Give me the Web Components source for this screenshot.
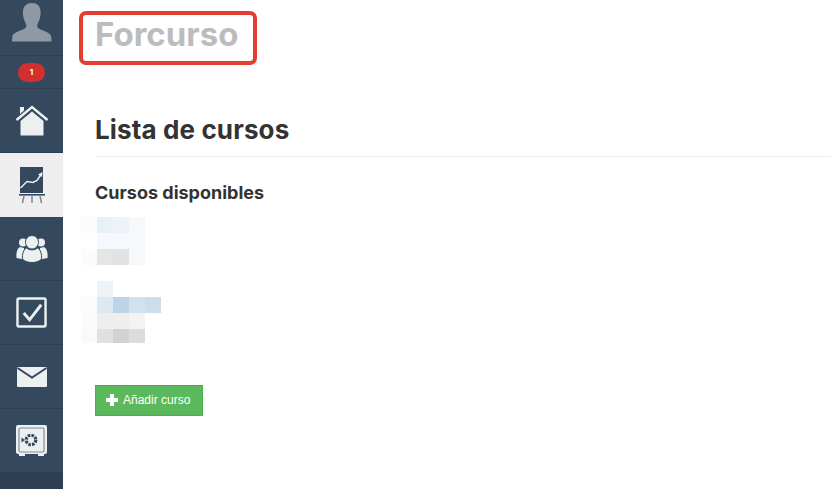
<!DOCTYPE html>
<html lang="es">
<head>
<meta charset="utf-8">
<title>Forcurso</title>
<style>
	html, body { margin: 0; height: 100%; background: #fff; overflow: hidden; }
	body { font-family: Inter, "Liberation Sans", sans-serif; }
</style>
</head>
<body>
<app-shell>
	<side-nav slot="nav">
		<nav-item size="avatar">
			<svg style="margin-bottom:9px" width="42" height="40" viewBox="0 2 44 42" preserveAspectRatio="none"><path fill="#8e99a4" d="M22 2c6 0 9 3.500 9 10 0 3-.5 6-1.500 8.500-.8 2-2 3.500-2 5.500 0 2 1 3 4 4 5 1.700 9.500 3.500 10.500 6.500l.5 6H1l.5-6c1-3 5.500-4.800 10.500-6.500 3-1 4-2 4-4 0-2-1.200-3.500-2-5.500C13 18 12.500 15 12.500 12 12.500 5.500 16 2 22 2z"/></svg>
		</nav-item>
		<nav-item size="badge"><span class="badge">1</span></nav-item>
		<nav-item>
			<svg width="34" height="32" viewBox="0 0 34 32"><path fill="#ecf0f1" d="M5 2h4v3.500L5 9z"/><path fill="none" stroke="#ecf0f1" stroke-width="2.400" d="M1.500 15L17 2l15.500 13"/><path fill="#ecf0f1" d="M17 6.500l11.500 9.500V30.500H5.500V16z"/></svg>
		</nav-item>
		<nav-item active>
			<svg width="26" height="36" viewBox="0 0 26 36"><path fill="#34495e" d="M1 0h23v26H1z"/><path fill="none" stroke="#ecf0f1" stroke-width="1.500" d="M1.500 21L8 14.500l6 1 4-2 4-6"/><path fill="#ecf0f1" d="M23.500 5l-.5 5-4-2.500z"/><path fill="#34495e" d="M0 27h26v1.600H0z"/><path fill="none" stroke="#7b8793" stroke-width="1.500" d="M5 29l-1.500 7M13 29v7M21 29l1.500 7"/></svg>
		</nav-item>
		<nav-item>
			<svg width="32" height="28" viewBox="0 0 32 28"><g fill="#ecf0f1"><circle cx="7" cy="7.500" r="4"/><circle cx="25" cy="7.500" r="4"/><path d="M.500 23c-.500-5 .500-9.500 3.500-11l4 1 1 9-1 2.500zM31.500 23c.500-5-.5-9.500-3.500-11l-4 1-1 9 1 2.500z"/></g><path fill="#ecf0f1" stroke="#34495e" d="M16 .500a6.500 6.500 0 0 1 6.500 6.800c0 3.700-3 6.700-6.500 6.700s-6.500-3-6.500-6.700A6.500 6.500 0 0 1 16 .500z"/><path fill="#ecf0f1" stroke="#34495e" d="M10.500 13c3 2.500 8 2.500 11 0 3 1.500 4.500 6 4 11-2 2.500-6 3.500-9.500 3.500S8.500 26.500 6.500 24c-.500-5 1-9.500 4-11z"/></svg>
		</nav-item>
		<nav-item>
			<svg width="31" height="31" viewBox="0 0 32 32"><rect x="1.500" y="1.500" width="29" height="29" rx="1.500" fill="none" stroke="#ecf0f1" stroke-width="2.500"/><path fill="none" stroke="#ecf0f1" stroke-width="3" d="M8 16.500l6 7L26 8"/></svg>
		</nav-item>
		<nav-item>
			<svg width="30" height="20" viewBox="0 0 30 20"><rect width="30" height="20" rx="1" fill="#ecf0f1"/><path fill="none" stroke="#34495e" stroke-width="2" d="M.5 1L15 10.500 29.500 1"/></svg>
		</nav-item>
		<nav-item>
			<svg width="31" height="31" viewBox="0 0 31 31"><rect x="0" y="0" width="31" height="29" rx="2" fill="#ecf0f1"/><path fill="#ecf0f1" d="M3 28h6v3H3zM22 28h6v3h-6z"/><rect x="3" y="3" width="25" height="24" rx="1.500" fill="#ecf0f1" stroke="#7e8c99" stroke-width="1.200"/><circle cx="15" cy="15" r="4.800" fill="none" stroke="#34495e" stroke-width="3.200" stroke-dasharray="2.600 1.150"/><path fill="#34495e" d="M5.500 12.500l3.500 2.500-3.500 2.500z"/></svg>
		</nav-item>
	</side-nav>

	<page-title>Forcurso</page-title>

	<section-heading>Lista de cursos</section-heading>

	<sub-heading>Cursos disponibles</sub-heading>

	<pixel-blur data-rows="fbfdfd,e8f0f8,edf3f9,f6f9fc|fff,f5f8fc,f6f9fc,f7fafd|fbfbfb,e5e5e5,e2e2e2,f8f8f8"></pixel-blur>
	<pixel-blur class="second" data-rows="fff,eef3f8,fff,fff,fff|fcfcfc,dce8f3,bdd3e6,d3e0ed,cfdde9|fbfbfb,eeeeee,eeeeee,f3f3f3,fff|fbfaf9,e0e0e0,d2d2d2,dbdcdd,fff"></pixel-blur>

	<add-button>Añadir curso</add-button>
</app-shell>

<script>
	// ==========
	// App shell.
	// ==========

	class AppShell extends HTMLElement {
		constructor() {
			super();
			this.attachShadow({ mode: 'open' });
			this.shadowRoot.innerHTML = `
				<style>
					:host { display: flex; height: 489px; overflow: hidden; }
					main { flex: 1; min-width: 0; padding: 11px 0 0 16px; }
				</style>
				<slot name="nav"></slot>
				<main><slot></slot></main>
			`;
		}
	}

	// =========
	// Side nav.
	// =========

	class SideNav extends HTMLElement {
		constructor() {
			super();
			this.attachShadow({ mode: 'open' });
			this.shadowRoot.innerHTML = `
				<style>
					:host {
						display: flex;
						flex-direction: column;
						flex: none;
						width: 63px;
						height: 489px;
						background: #2c3e50;
					}
				</style>
				<slot></slot>
			`;
		}
	}

	class NavItem extends HTMLElement {
		constructor() {
			super();
			this.attachShadow({ mode: 'open' });
			this.shadowRoot.innerHTML = `
				<style>
					:host {
						display: flex;
						align-items: center;
						justify-content: center;
						box-sizing: border-box;
						height: 64px;
						background: #34495e;
						border-bottom: 1px solid #2c3e50;
					}
					:host([size="avatar"]) { height: 56px; }
					:host([size="badge"]) { height: 33px; }
					:host([active]) { background: #eee; border-bottom-color: #eee; }
					::slotted(.badge) {
						display: block;
						width: 27px;
						height: 19px;
						border-radius: 10px;
						background: #d32f2f;
						color: #fff;
						font: 700 8px/19px Inter, "Liberation Sans", sans-serif;
						text-align: center;
					}
				</style>
				<slot></slot>
			`;
		}
	}

	// =========
	// Headings.
	// =========

	class PageTitle extends HTMLElement {
		constructor() {
			super();
			this.attachShadow({ mode: 'open' });
			this.shadowRoot.innerHTML = `
				<style>
					:host {
						display: block;
						box-sizing: border-box;
						width: 178px;
						height: 54px;
						padding-left: 12px;
						border: 4px solid #e53e30;
						border-radius: 7px;
						color: #bcbcbc;
						font: 700 33px/38px Inter, "Liberation Sans", sans-serif;
					}
				</style>
				<slot></slot>
			`;
		}
	}

	class SectionHeading extends HTMLElement {
		constructor() {
			super();
			this.attachShadow({ mode: 'open' });
			this.shadowRoot.innerHTML = `
				<style>
					:host {
						display: block;
						box-sizing: border-box;
						height: 92px;
						margin: 0 0 0 16px;
						padding-top: 47px;
						border-bottom: 1px solid #eee;
						color: #333;
						letter-spacing: .13px;
						font: 700 26px/36px Inter, "Liberation Sans", sans-serif;
					}
				</style>
				<slot></slot>
			`;
		}
	}

	class SubHeading extends HTMLElement {
		constructor() {
			super();
			this.attachShadow({ mode: 'open' });
			this.shadowRoot.innerHTML = `
				<style>
					:host {
						display: block;
						margin: 24px 0 12px 16px;
						color: #333;
						font: 700 18px/24px Inter, "Liberation Sans", sans-serif;
					}
				</style>
				<slot></slot>
			`;
		}
	}

	// ==============
	// Blurred names.
	// ==============

	class PixelBlur extends HTMLElement {
		constructor() {
			super();
			this.attachShadow({ mode: 'open' });

			// Rows of hex colours, one cell is 16px.
			const rows = this.dataset.rows.split('|').map((row) => row.split(','));
			const cells = rows.flat().map((hex) => `<i style="background:#${hex}"></i>`).join('');

			this.shadowRoot.innerHTML = `
				<style>
					:host {
						display: grid;
						grid-template-columns: repeat(${rows[0].length}, 16px);
						grid-auto-rows: 16px;
						margin-left: 2px;
					}
					:host(.second) { margin-top: 16px; height: 62px; overflow: hidden; }
				</style>
				${cells}
			`;
		}
	}

	// ===========
	// Add button.
	// ===========

	class AddButton extends HTMLElement {
		constructor() {
			super();
			this.attachShadow({ mode: 'open' });
			this.shadowRoot.innerHTML = `
				<style>
					:host {
						display: flex;
						align-items: center;
						gap: 5px;
						box-sizing: border-box;
						width: 108px;
						height: 31px;
						margin: 42px 0 0 16px;
						padding: 0 0 2px 10px;
						background: #5cb85c;
						border: 1px solid #4cae4c;
						color: #fff;
						font: 12px/16px "Liberation Sans", sans-serif;
					}
					svg { flex: none; }
				</style>
				<svg width="12" height="12" viewBox="0 0 12 12"><path fill="#fff" d="M4 0h4v4h4v4H8v4H4V8H0V4h4z"/></svg>
				<span><slot></slot></span>
			`;
		}
	}

	// ===============
	// Define elements.
	// ===============

	customElements.define('app-shell', AppShell);
	customElements.define('side-nav', SideNav);
	customElements.define('nav-item', NavItem);
	customElements.define('page-title', PageTitle);
	customElements.define('section-heading', SectionHeading);
	customElements.define('sub-heading', SubHeading);
	customElements.define('pixel-blur', PixelBlur);
	customElements.define('add-button', AddButton);
</script>
</body>
</html>
